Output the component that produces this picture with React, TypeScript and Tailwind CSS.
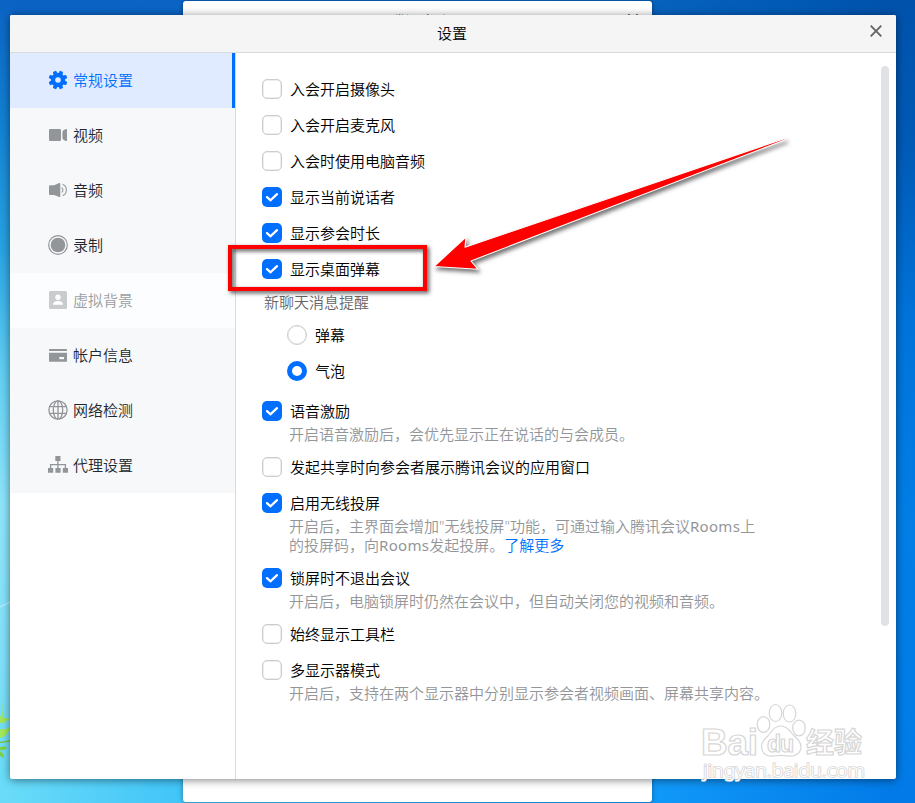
import type { ReactNode } from 'react'

function GearIcon() {
  return (
    <svg className="w-5 h-5" viewBox="0 0 20 20" fill="#006fff" aria-hidden="true">
      {[0, 45, 90, 135].map((deg) => (
        <rect key={deg} x="8.100" y="0.600" width="3.800" height="18.800" rx="1" transform={`rotate(${deg + 22.5} 10 10)`} />
      ))}
      <circle cx="10" cy="10" r="7.200" />
      <circle cx="10" cy="10" r="2.800" fill="#e0ebff" />
    </svg>
  )
}

function VideoIcon() {
  return (
    <svg className="w-5 h-5" viewBox="0 0 20 20" fill="#939699" aria-hidden="true">
      <rect x="1" y="4" width="12" height="12" rx="1" />
      <path d="M19 4.600v10.800c0 .5-.3.700-.8.500-2.100-.6-3.800-1.400-3.800-3.200V7.300c0-1.800 1.700-2.600 3.800-3.200.5-.2.800 0 .8.500z" />
    </svg>
  )
}

function AudioIcon() {
  return (
    <svg className="w-5 h-5" viewBox="0 0 20 20" fill="#939699" aria-hidden="true">
      <path d="M2 5.200h4l5.400-2.100c.5-.2.900 0 .9.500v12.800c0 .5-.4.700-.9.500L6 14.900H2c-.6 0-1-.3-1-.9V6.100c0-.6.4-.9 1-.9z" />
      <path d="M13.600 7.600c1.700.8 1.700 4 0 4.800M14.600 4.400c5 1.600 5 9.600 0 11.200" fill="none" stroke="#a3a6a8" strokeWidth="1.300" />
    </svg>
  )
}

function RecordIcon() {
  return (
    <svg className="w-5 h-5" viewBox="0 0 20 20" aria-hidden="true">
      <circle cx="10" cy="10" r="9.300" fill="none" stroke="#939699" strokeWidth="1.200" />
      <circle cx="10" cy="10" r="7.300" fill="#939699" />
    </svg>
  )
}

function PortraitIcon() {
  return (
    <svg className="w-5 h-5" viewBox="0 0 20 20" fill="#c9cbcc" aria-hidden="true">
      <rect x="1" y="1" width="18" height="18" rx="1.500" />
      <circle cx="10" cy="7.300" r="2.700" fill="#fff" />
      <path d="M5 14.700c0-2.200 2-3.600 5-3.600s5 1.400 5 3.600z" fill="#fff" />
    </svg>
  )
}

function CardIcon() {
  return (
    <svg className="w-5 h-5" viewBox="0 0 20 20" fill="#939699" aria-hidden="true">
      <path d="M2 4h16c.6 0 1 .4 1 1v1H1V5c0-.6.4-1 1-1zM1 7.700h18v8c0 .6-.4 1-1 1H2c-.6 0-1-.4-1-1z" />
      <rect x="11.300" y="12" width="4.700" height="2.200" fill="#f7f8fa" />
    </svg>
  )
}

function GlobeIcon() {
  return (
    <svg className="w-5 h-5" viewBox="0 0 20 20" fill="none" stroke="#939699" strokeWidth="1.300" aria-hidden="true">
      <circle cx="10" cy="10" r="9.100" />
      <ellipse cx="10" cy="10" rx="4.700" ry="9.100" />
      <path d="M10 1v18M1.700 6.700h16.600M1.700 13.300h16.600" />
    </svg>
  )
}

function ProxyIcon() {
  return (
    <svg className="w-5 h-5" viewBox="0 0 20 20" fill="#939699" aria-hidden="true">
      <path d="M7.300 1h5.200v5H7.300zM0 13h5.200v4.800H0zM7.400 13h5.200v4.800H7.400zM14.800 13H20v4.800h-5.200z" />
      <path d="M9.900 6v7M2.600 13V9.600h14.800V13" fill="none" stroke="#939699" strokeWidth="1.300" />
    </svg>
  )
}

const tabs = [
  { label: '常规设置', icon: <GearIcon />, state: 'active' },
  { label: '视频', icon: <VideoIcon /> },
  { label: '音频', icon: <AudioIcon /> },
  { label: '录制', icon: <RecordIcon /> },
  { label: '虚拟背景', icon: <PortraitIcon />, state: 'disabled' },
  { label: '帐户信息', icon: <CardIcon /> },
  { label: '网络检测', icon: <GlobeIcon /> },
  { label: '代理设置', icon: <ProxyIcon /> },
]

const tabStyles: Record<string, string> = {
  active: 'bg-[#e0ebff] text-[#006fff] border-r-[3px] border-[#006fff]',
  disabled: 'bg-[#fcfdff] text-[#9b9da0]',
  normal: 'bg-[#f7f8fa] text-[#22262e]',
}

type OptionProps = { label: string; checked?: boolean; marked?: boolean; children?: ReactNode }

const meetingOptions: OptionProps[] = [
  { label: '入会开启摄像头' },
  { label: '入会开启麦克风' },
  { label: '入会时使用电脑音频' },
  { label: '显示当前说话者', checked: true },
  { label: '显示参会时长', checked: true },
  { label: '显示桌面弹幕', checked: true, marked: true },
]

function Option({ label, checked, marked, children }: OptionProps) {
  return (
    <div className={children ? 'mb-[13px]' : 'mb-4'}>
      <label className="relative flex items-center h-5 gap-2 whitespace-nowrap">
        {checked ? (
          <span className="w-5 h-5 rounded-[5px] bg-[#006fff]">
            <svg className="w-5 h-5" viewBox="0 0 20 20" fill="none" stroke="#fff" strokeWidth="2.300" strokeLinecap="round" aria-hidden="true">
              <path d="M5 10.100l3.500 3.200 6.500-6.100" />
            </svg>
          </span>
        ) : (
          <span className="w-5 h-5 rounded-[5px] border-[1.5px] border-[#cbcccf] bg-white shadow-[inset_0_0_0_.5px_#dcdde0]" />
        )}
        <span>{label}</span>
        {marked && (
          <span className="absolute -left-[34px] -top-[14px] w-[199px] h-[46px] border-4 border-[#f00] [filter:drop-shadow(2px_2px_2px_rgba(0,0,0,.7))]" />
        )}
      </label>
      {children && <p className="mt-1 ml-[27px] leading-[19px] text-[#939699] whitespace-nowrap">{children}</p>}
    </div>
  )
}

function Radio({ label, checked }: { label: string; checked?: boolean }) {
  return (
    <label className="flex items-center h-9 gap-2">
      <span className={checked ? 'w-5 h-5 rounded-full border-[5px] border-[#006fff] bg-white' : 'w-5 h-5 rounded-full border border-[#cbcccf] bg-white shadow-[inset_0_0_0_.5px_#dcdde0]'} />
      <span>{label}</span>
    </label>
  )
}

function Arrow() {
  return (
    <svg className="absolute left-[425px] top-[125px] w-[375px] h-[160px] [filter:drop-shadow(2px_3px_2px_rgba(0,0,0,.55))]" viewBox="425 125 375 160" aria-hidden="true">
      <path d="M434 266.500L466 237l-1 10.300L785 138.400l.3 1.300L471 261l7 8.300z" fill="#f00" stroke="#fff" strokeWidth="1.100" strokeLinejoin="round" />
    </svg>
  )
}

function Watermark() {
  return (
    <svg className="absolute left-[695px] top-[698px] w-[180px] h-[90px]" viewBox="695 698 180 90" fill="#fff" stroke="#d6d6d6" strokeWidth="1.200" aria-hidden="true">
      <text x="701" y="755" fontSize="37" textLength="57" className="font-['Liberation_Sans'] font-bold">Bai</text>
      <ellipse cx="763.500" cy="724.500" rx="6.300" ry="7.800" />
      <ellipse cx="775.500" cy="713" rx="6.300" ry="8.500" />
      <ellipse cx="789.500" cy="713.500" rx="6.300" ry="8.500" />
      <ellipse cx="799" cy="728" rx="6.300" ry="7.800" />
      <path d="M780.500 726c-5 0-8 3.500-10.500 7.500-3.500 4.500-9 7-8.500 13.500.5 7 6 10 12 9 5-.8 9-.8 14 0 7 1 13-2 13.500-9 .4-6.500-6-9.500-9.500-14-2.500-3.500-6-7-11-7z" />
      <text x="767" y="752" fontSize="23" textLength="27" className="font-['Liberation_Sans'] font-bold">du</text>
      <text x="806" y="753" fontSize="28" className="font-['Noto_Sans_CJK_SC'] font-bold">经验</text>
      <text x="703" y="777" fontSize="18" textLength="162" lengthAdjust="spacingAndGlyphs" strokeWidth="1.600" paintOrder="stroke" className="font-['Noto_Sans']">jingyan.baidu.com</text>
    </svg>
  )
}

export default function App() {
  return (
    <div className="relative w-[915px] h-[803px] overflow-hidden font-['Noto_Sans','Noto_Sans_CJK_SC',sans-serif] font-[350] text-[15px] text-black [background:linear-gradient(180deg,#0b63c4_0%,#1180d2_15%,#28a3e3_32%,#62cff3_48%,#8ee5fa_65%,#80e0f9_85%,#68dcf8_100%)_0_0/12px_779px_no-repeat,linear-gradient(180deg,#0052ab_0%,#005ab6_18%,#0073da_40%,#027ee6_65%,#027be8_100%)_100%_0/21px_803px_no-repeat,linear-gradient(90deg,#0b63c4_0%,#0b68c4_60%,#0059b4_88%,#0052ab_97%)_0_0/100%_20px_no-repeat,linear-gradient(90deg,#6bdcf8_0%,#40c4f8_20%,#1098f8_72%,#027be8_97%)_0_100%/100%_40px_no-repeat]">
      {/* grass blades of the desktop wallpaper */}
      <svg className="absolute left-0 top-[600px] w-[10px] h-[170px]" viewBox="0 600 10 170" fill="#a2e85c" aria-hidden="true">
        <path d="M0 607l10-5" stroke="#c9f4fc" strokeWidth="1" />
        <path d="M2.500 703q3 7 0 15h-1q2-8 1-15zM0 716q4 3 10 2-4 6-10 5zM0 729q5 1 10-2-1 9-10 11z" />
        <path d="M0 742.500l10-1.500" stroke="#7cc940" strokeWidth="1.600" />
        <path d="M0 747q5-2 7 1-3 3-7 2zM0 751q4 2 4 7-4-1-4-3z" fill="#7fd348" />
      </svg>

      {/* main meeting window, mostly hidden behind the dialog */}
      <div className="absolute left-[183px] top-px w-[469px] h-[801px] rounded-[3px] bg-white shadow-[0_0_5px_rgba(0,0,0,.4)]">
        <div className="flex justify-center pl-[5px] pt-[10px] leading-5">腾讯会议</div>
        <span className="absolute right-[14px] top-[13px] w-[10px] h-px border-x-[2px] border-[#777]" />
      </div>

      <div className="absolute left-[10px] top-[15px] w-[886px] h-[764px] flex flex-col rounded-[2px] bg-white shadow-[0_1px_9px_rgba(0,0,0,.5)]">
        <header className="flex items-center justify-center h-[38px] shrink-0 rounded-t-[2px] border-b border-[#dadada] bg-[#f5f5f5]">
          <h1 className="flex-1 pl-[24px] text-center">设置</h1>
          <button className="mr-3.5 mb-1.5" aria-label="关闭">
            <svg className="w-3 h-3" viewBox="0 0 12 12" stroke="#636569" strokeWidth="1.900" aria-hidden="true">
              <path d="M.7.700l10.600 10.600M11.300.700L.7 11.300" />
            </svg>
          </button>
        </header>

        <div className="flex flex-1 min-h-0">
          <nav className="w-[226px] shrink-0 border-r border-[#dadada]">
            {tabs.map((tab) => (
              <div key={tab.label} className={`flex items-center gap-[5px] h-[55px] pl-[38px] pb-px ${tabStyles[tab.state ?? 'normal']}`}>
                {tab.icon}
                <span>{tab.label}</span>
              </div>
            ))}
          </nav>

          <main className="flex-1 pt-[26px] pl-[26px]">
            {meetingOptions.map((option) => (
              <Option key={option.label} {...option} />
            ))}

            <h2 className="-mt-2 pl-0.5 h-[30px] leading-[30px] text-[#636569]">新聊天消息提醒</h2>
            <div className="pl-[25px] mb-3">
              <Radio label="弹幕" />
              <Radio label="气泡" checked />
            </div>

            <Option label="语音激励" checked>
              开启语音激励后，会优先显示正在说话的与会成员。
            </Option>
            <Option label="发起共享时向参会者展示腾讯会议的应用窗口" />
            <Option label="启用无线投屏" checked>
              开启后，主界面会增加"无线投屏"功能，可通过输入腾讯会议<span className="font-normal tracking-[.3px]">Rooms</span>上
              <br />
              的投屏码，向<span className="font-normal tracking-[.3px]">Rooms</span>发起投屏。
              <a className="text-[#006fff]">了解更多</a>
            </Option>
            <Option label="锁屏时不退出会议" checked>
              开启后，电脑锁屏时仍然在会议中，但自动关闭您的视频和音频。
            </Option>
            <Option label="始终显示工具栏" />
            <Option label="多显示器模式">
              开启后，支持在两个显示器中分别显示参会者视频画面、屏幕共享内容。
            </Option>
          </main>

          <div className="w-2 h-[560px] mt-[13px] mr-[7px] shrink-0 rounded-full bg-[#e1e2e6]" />
        </div>
      </div>

      <Arrow />
      <Watermark />
    </div>
  )
}
